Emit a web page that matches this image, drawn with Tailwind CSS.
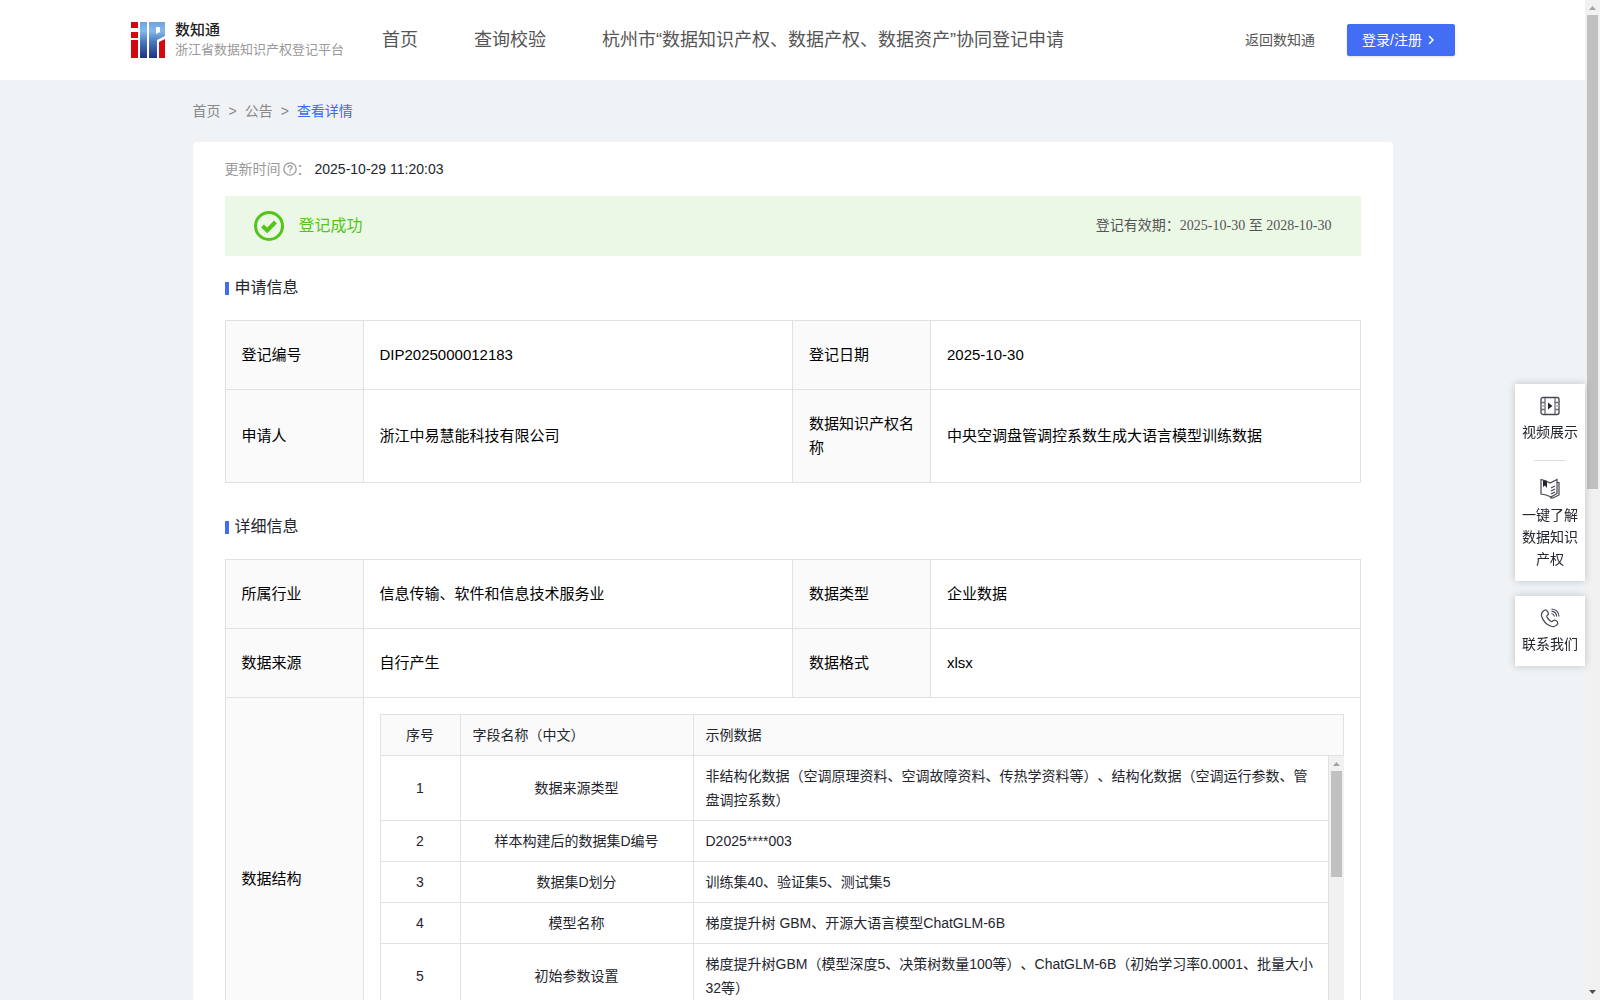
<!DOCTYPE html>
<html lang="zh-CN">

<head>
  <meta charset="UTF-8" />
  <meta name="viewport" content="width=device-width, initial-scale=1.0" />
  <title>浙江省数据知识产权登记平台</title>
  <script src="https://cdn.jsdelivr.net/npm/@tailwindcss/browser@4"></script>
</head>

<body class="h-screen flex overflow-hidden bg-[#eff3f6] font-['Liberation_Sans','Noto_Sans_CJK_SC',sans-serif] text-sm text-[#24262e] [text-spacing-trim:space-all]">
  <div class="flex-1 min-w-0 h-full overflow-hidden">
    <header class="h-20 bg-white flex items-center px-[130px] text-[#555]">
      <a href="#" class="flex items-center gap-[9px] w-[252px]">
        <svg class="w-9 h-9 shrink-0" viewBox="0 0 36 36">
          <defs>
            <linearGradient id="blue" gradientUnits="userSpaceOnUse" x1="0" y1="0" x2="0" y2="36">
              <stop offset="0" stop-color="#6fa3dc" />
              <stop offset=".25" stop-color="#86b8ea" />
              <stop offset=".55" stop-color="#4a78bd" />
              <stop offset="1" stop-color="#1e3280" />
            </linearGradient>
          </defs>
          <path fill="#d20a10" d="M1 0h7v6H1zM1 10h7v6H1zM1 18h7v18H1zM29 20l6-3v19h-6z" />
          <path fill="url(#blue)" d="M10 0h7v36h-7zM19 0h16v14l-8 4v18h-8zM26 5v7l4-2V5z" fill-rule="evenodd" />
        </svg>
        <span class="flex flex-col">
          <span class="text-[15px] leading-5 font-medium text-[#222]">数知通</span>
          <span class="text-[13px] leading-5 text-[#999] whitespace-nowrap">浙江省数据知识产权登记平台</span>
        </span>
      </a>
      <nav class="flex gap-14 text-lg whitespace-nowrap">
        <a href="#">首页</a>
        <a href="#">查询校验</a>
        <a href="#">杭州市“数据知识产权、数据产权、数据资产”协同登记申请</a>
      </nav>
      <a href="#" class="ml-auto mr-8 whitespace-nowrap">返回数知通</a>
      <button class="h-8 w-[108px] pl-[15px] flex items-center gap-[3px] rounded-xs bg-[#446df6] text-white whitespace-nowrap shadow-sm">登录/注册
        <svg class="w-3 h-3" viewBox="0 0 12 12" fill="none" stroke="currentColor" stroke-width="1.5">
          <path d="M4 2l4 4-4 4" />
        </svg>
      </button>
    </header>

    <div class="max-w-[1200px] mx-auto">
      <nav class="h-[62px] flex items-center gap-2 text-[#888]">
        <a href="#">首页</a>
        <span>&gt;</span>
        <a href="#">公告</a>
        <span>&gt;</span>
        <a href="#" class="text-[#3a69f3]">查看详情</a>
      </nav>

      <main class="bg-white rounded px-8 pt-[15px]">
        <div class="flex items-center leading-6 text-[#999]">
          更新时间
          <svg class="w-[14px] h-[14px] ml-0.5" viewBox="0 0 14 14" fill="none" stroke="currentColor">
            <circle cx="7" cy="7" r="6.2" stroke-width="1.3" />
            <path d="M5 5.6c0-2.6 4-2.4 4-.1 0 1.400-2 1.500-2 2.900M7 9.500v1.200" stroke-width="1.300" />
          </svg>
          ：<span class="ml-1 text-[#24262e]">2025-10-29 11:20:03</span>
        </div>

        <div class="mt-[15px] h-[60px] px-[29px] flex items-center bg-[#ecf8e6]">
          <svg class="w-8 h-8" viewBox="0 0 32 32" fill="none" stroke="#52c41a">
            <circle cx="15" cy="16" r="13.500" stroke-width="3" />
            <path d="M8.500 16l4.700 4.500L21.500 12" stroke-width="4" />
          </svg>
          <span class="ml-[13px] text-base text-[#52c41a]">登记成功</span>
          <span class="ml-auto font-['Liberation_Serif','Noto_Sans_CJK_SC',serif] text-[#555]">登记有效期：2025-10-30 至 2028-10-30</span>
        </div>

        <h2 class="mt-5 flex items-center gap-1.5 text-base leading-6">
          <i class="w-1 h-[13px] bg-[#446df6]"></i>申请信息
        </h2>
        <table class="mt-5 w-full table-fixed border-collapse text-[15px] leading-6 text-black">
          <colgroup>
            <col class="w-[138px]">
            <col>
            <col class="w-[138px]">
            <col>
          </colgroup>
          <tr class="h-[69px]">
            <th class="border border-[#e1e1e1] bg-[#fafafa] px-4 text-left font-normal">登记编号</th>
            <td class="border border-[#e1e1e1] px-4">DIP2025000012183</td>
            <th class="border border-[#e1e1e1] bg-[#fafafa] px-4 text-left font-normal">登记日期</th>
            <td class="border border-[#e1e1e1] px-4">2025-10-30</td>
          </tr>
          <tr class="h-[93px]">
            <th class="border border-[#e1e1e1] bg-[#fafafa] px-4 text-left font-normal">申请人</th>
            <td class="border border-[#e1e1e1] px-4">浙江中易慧能科技有限公司</td>
            <th class="border border-[#e1e1e1] bg-[#fafafa] px-4 text-left font-normal">数据知识产权名称</th>
            <td class="border border-[#e1e1e1] px-4">中央空调盘管调控系数生成大语言模型训练数据</td>
          </tr>
        </table>

        <h2 class="mt-8 flex items-center gap-1.5 text-base leading-6">
          <i class="w-1 h-[13px] bg-[#446df6]"></i>详细信息
        </h2>
        <table class="mt-5 w-full table-fixed border-collapse text-[15px] leading-6 text-black">
          <colgroup>
            <col class="w-[138px]">
            <col>
            <col class="w-[138px]">
            <col>
          </colgroup>
          <tr class="h-[69px]">
            <th class="border border-[#e1e1e1] bg-[#fafafa] px-4 text-left font-normal">所属行业</th>
            <td class="border border-[#e1e1e1] px-4">信息传输、软件和信息技术服务业</td>
            <th class="border border-[#e1e1e1] bg-[#fafafa] px-4 text-left font-normal">数据类型</th>
            <td class="border border-[#e1e1e1] px-4">企业数据</td>
          </tr>
          <tr class="h-[69px]">
            <th class="border border-[#e1e1e1] bg-[#fafafa] px-4 text-left font-normal">数据来源</th>
            <td class="border border-[#e1e1e1] px-4">自行产生</td>
            <th class="border border-[#e1e1e1] bg-[#fafafa] px-4 text-left font-normal">数据格式</th>
            <td class="border border-[#e1e1e1] px-4">xlsx</td>
          </tr>
          <tr>
            <th class="border border-[#e1e1e1] bg-[#fafafa] px-4 text-left font-normal">数据结构</th>
            <td colspan="3" class="border border-[#e1e1e1] p-4">
              <div class="border-l border-t border-[#e1e1e1] text-sm leading-6 text-[#24262e]">
                <table class="w-full table-fixed border-separate border-spacing-0">
                  <colgroup>
                    <col class="w-20">
                    <col class="w-[233px]">
                    <col>
                  </colgroup>
                  <tr class="bg-[#fafafa]">
                    <th class="border-r border-b border-[#e1e1e1] py-2 font-normal">序号</th>
                    <th class="border-r border-b border-[#e1e1e1] px-3 py-2 text-left font-normal">字段名称（中文）</th>
                    <th class="border-r border-b border-[#e1e1e1] px-3 py-2 text-left font-normal">示例数据</th>
                  </tr>
                </table>
                <div class="flex h-[288px] overflow-hidden">
                  <div class="flex-1 min-w-0">
                    <table class="w-full table-fixed border-separate border-spacing-0">
                      <colgroup>
                        <col class="w-20">
                        <col class="w-[233px]">
                        <col>
                      </colgroup>
                      <tr>
                        <td class="border-r border-b border-[#e1e1e1] py-2 text-center">1</td>
                        <td class="border-r border-b border-[#e1e1e1] px-3 py-2 text-center">数据来源类型</td>
                        <td class="border-r border-b border-[#e1e1e1] px-3 py-2">非结构化数据（空调原理资料、空调故障资料、传热学资料等）、结构化数据（空调运行参数、管盘调控系数）</td>
                      </tr>
                      <tr>
                        <td class="border-r border-b border-[#e1e1e1] py-2 text-center">2</td>
                        <td class="border-r border-b border-[#e1e1e1] px-3 py-2 text-center">样本构建后的数据集D编号</td>
                        <td class="border-r border-b border-[#e1e1e1] px-3 py-2">D2025****003</td>
                      </tr>
                      <tr>
                        <td class="border-r border-b border-[#e1e1e1] py-2 text-center">3</td>
                        <td class="border-r border-b border-[#e1e1e1] px-3 py-2 text-center">数据集D划分</td>
                        <td class="border-r border-b border-[#e1e1e1] px-3 py-2">训练集40、验证集5、测试集5</td>
                      </tr>
                      <tr>
                        <td class="border-r border-b border-[#e1e1e1] py-2 text-center">4</td>
                        <td class="border-r border-b border-[#e1e1e1] px-3 py-2 text-center">模型名称</td>
                        <td class="border-r border-b border-[#e1e1e1] px-3 py-2">梯度提升树 GBM、开源大语言模型ChatGLM-6B</td>
                      </tr>
                      <tr>
                        <td class="border-r border-b border-[#e1e1e1] py-2 text-center">5</td>
                        <td class="border-r border-b border-[#e1e1e1] px-3 py-2 text-center">初始参数设置</td>
                        <td class="border-r border-b border-[#e1e1e1] px-3 py-2">梯度提升树GBM（模型深度5、决策树数量100等）、ChatGLM-6B（初始学习率0.0001、批量大小32等）</td>
                      </tr>
                    </table>
                  </div>
                  <div class="w-[15px] bg-[#f1f1f1] flex flex-col items-center">
                    <svg class="w-[15px] h-[15px]" viewBox="0 0 15 15" fill="#a3a3a3">
                      <path d="M4 10l3.500-4L11 10z" />
                    </svg>
                    <div class="w-[11px] h-[106px] bg-[#c1c1c1]"></div>
                  </div>
                </div>
              </div>
            </td>
          </tr>
        </table>
      </main>
    </div>
  </div>

  <!-- page scrollbar -->
  <div class="w-[15px] h-full bg-[#f1f1f1] flex flex-col items-center">
    <svg class="w-[15px] h-[15px] shrink-0" viewBox="0 0 15 15" fill="#a3a3a3">
      <path d="M4 10l3.500-4L11 10z" />
    </svg>
    <div class="w-[11px] h-[474px] bg-[#c1c1c1]"></div>
    <svg class="w-[15px] h-[15px] shrink-0 mt-auto" viewBox="0 0 15 15" fill="#505050">
      <path d="M4 5l3.500 4L11 5z" />
    </svg>
  </div>

  <!-- floating tools -->
  <aside class="fixed right-[15px] top-96 w-[70px] flex flex-col gap-[15px] text-center leading-[22px]">
    <div class="bg-white px-[7px] pt-3 pb-[11px] shadow-[0_0_8px_rgba(0,0,0,0.2)]">
      <a href="#" class="flex flex-col items-center gap-[5px]">
        <svg class="w-5 h-5" viewBox="0 0 20 20" fill="none" stroke="#6b6d75" stroke-width="1.3">
          <rect x="1" y="1.500" width="18" height="17" rx="2" stroke="#444650" />
          <path d="M5 2v16M15 2v16M1 6.500h4M1 13.500h4M15 6.500h4M15 13.500h4" />
          <path d="M1 10h4M15 10h4" stroke="#aaa" />
          <path d="M8 6.500v7l4.500-3.500z" fill="#24262e" stroke="none" />
        </svg>
        视频展示
      </a>
      <hr class="w-8 mx-auto mt-[17px] mb-[17px] border-[#ddd]">
      <a href="#" class="flex flex-col items-center gap-[5px]">
        <svg class="w-5 h-[21px]" viewBox="0 0 20 21" fill="none" stroke="#444650" stroke-width="1.200">
          <path d="M1 1.500c3 .5 6 1.500 9 3.500l7-3.500v14l-6 3.500c-3-1.500-6-2.500-10-3zM17 4.500h2v12.500l-6 3h-3" />
          <path d="M3 2v7l2-1.500L7 10V3.500z" fill="#24262e" stroke="none" />
          <path d="M11 10l4-2M11 13l4-2M11 16l4-2" />
        </svg>
        一键了解数据知识产权
      </a>
    </div>
    <div class="bg-white px-[7px] pt-3 pb-[11px] shadow-[0_0_8px_rgba(0,0,0,0.2)]">
      <a href="#" class="flex flex-col items-center gap-[5px]">
        <svg class="w-5 h-5" viewBox="0 0 20 20" fill="none" stroke="#444650" stroke-width="1.200">
          <path d="M4.500 2.200C6 1.200 7 2.500 8 4.300c.8 1.500.5 2.200-.6 3-.9.700-.8 1.300 0 2.600.9 1.400 2 2.600 3.300 3.400 1 .6 1.500.5 2.200-.4.800-1 1.700-1.200 3-.4 1.900 1.200 2.500 2 1.600 3.500-1.200 2.200-3.800 3.300-7 2C6.300 16.500 3 12.500 1.700 8.500.800 5.500 2 3.600 4.500 2.200z" />
          <path d="M11.500 5.500c1.700.3 2.700 1.400 3 3M11.500 3.200c3 .3 4.900 2.300 5.200 5.300M11.500 1c4.300.3 7.200 3 7.500 7.500" />
        </svg>
        联系我们
      </a>
    </div>
  </aside>
</body>

</html>
